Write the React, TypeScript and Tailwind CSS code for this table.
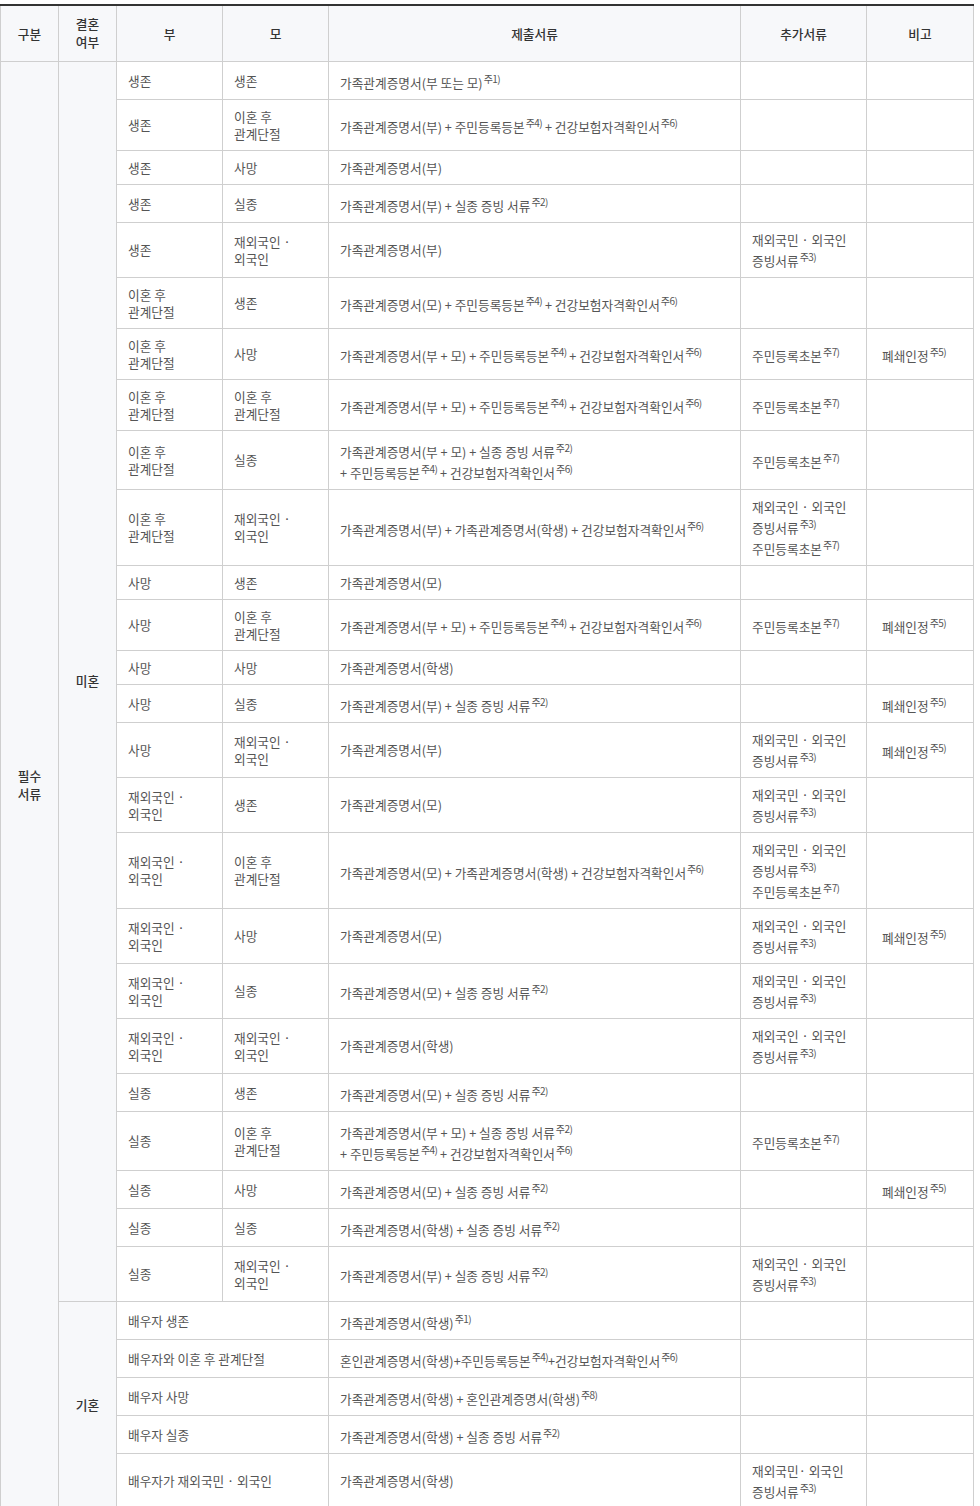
import React from "react";

type Row = {
  bu?: string;
  mo?: string;
  docs: string;
  extra?: string;
  note?: string;
};

// "^N" marks a footnote reference, rendered as 주N)
const single: Row[] = [
  { bu: "생존", mo: "생존", docs: "가족관계증명서(부 또는 모)^1" },
  { bu: "생존", mo: "이혼 후\n관계단절", docs: "가족관계증명서(부) + 주민등록등본^4 + 건강보험자격확인서^6" },
  { bu: "생존", mo: "사망", docs: "가족관계증명서(부)" },
  { bu: "생존", mo: "실종", docs: "가족관계증명서(부) + 실종 증빙 서류^2" },
  { bu: "생존", mo: "재외국인 ·\n외국인", docs: "가족관계증명서(부)", extra: "재외국민 · 외국인\n증빙서류^3" },
  { bu: "이혼 후\n관계단절", mo: "생존", docs: "가족관계증명서(모) + 주민등록등본^4 + 건강보험자격확인서^6" },
  { bu: "이혼 후\n관계단절", mo: "사망", docs: "가족관계증명서(부 + 모) + 주민등록등본^4 + 건강보험자격확인서^6", extra: "주민등록초본^7", note: "폐쇄인정^5" },
  { bu: "이혼 후\n관계단절", mo: "이혼 후\n관계단절", docs: "가족관계증명서(부 + 모) + 주민등록등본^4 + 건강보험자격확인서^6", extra: "주민등록초본^7" },
  { bu: "이혼 후\n관계단절", mo: "실종", docs: "가족관계증명서(부 + 모) + 실종 증빙 서류^2\n+ 주민등록등본^4 + 건강보험자격확인서^6", extra: "주민등록초본^7" },
  { bu: "이혼 후\n관계단절", mo: "재외국인 ·\n외국인", docs: "가족관계증명서(부) + 가족관계증명서(학생) + 건강보험자격확인서^6", extra: "재외국인 · 외국인\n증빙서류^3\n주민등록초본^7" },
  { bu: "사망", mo: "생존", docs: "가족관계증명서(모)" },
  { bu: "사망", mo: "이혼 후\n관계단절", docs: "가족관계증명서(부 + 모) + 주민등록등본^4 + 건강보험자격확인서^6", extra: "주민등록초본^7", note: "폐쇄인정^5" },
  { bu: "사망", mo: "사망", docs: "가족관계증명서(학생)" },
  { bu: "사망", mo: "실종", docs: "가족관계증명서(부) + 실종 증빙 서류^2", note: "폐쇄인정^5" },
  { bu: "사망", mo: "재외국인 ·\n외국인", docs: "가족관계증명서(부)", extra: "재외국민 · 외국인\n증빙서류^3", note: "폐쇄인정^5" },
  { bu: "재외국인 ·\n외국인", mo: "생존", docs: "가족관계증명서(모)", extra: "재외국민 · 외국인\n증빙서류^3" },
  { bu: "재외국인 ·\n외국인", mo: "이혼 후\n관계단절", docs: "가족관계증명서(모) + 가족관계증명서(학생) + 건강보험자격확인서^6", extra: "재외국민 · 외국인\n증빙서류^3\n주민등록초본^7" },
  { bu: "재외국인 ·\n외국인", mo: "사망", docs: "가족관계증명서(모)", extra: "재외국인 · 외국인\n증빙서류^3", note: "폐쇄인정^5" },
  { bu: "재외국인 ·\n외국인", mo: "실종", docs: "가족관계증명서(모) + 실종 증빙 서류^2", extra: "재외국민 · 외국인\n증빙서류^3" },
  { bu: "재외국인 ·\n외국인", mo: "재외국인 ·\n외국인", docs: "가족관계증명서(학생)", extra: "재외국인 · 외국인\n증빙서류^3" },
  { bu: "실종", mo: "생존", docs: "가족관계증명서(모) + 실종 증빙 서류^2" },
  { bu: "실종", mo: "이혼 후\n관계단절", docs: "가족관계증명서(부 + 모) + 실종 증빙 서류^2\n+ 주민등록등본^4 + 건강보험자격확인서^6", extra: "주민등록초본^7" },
  { bu: "실종", mo: "사망", docs: "가족관계증명서(모) + 실종 증빙 서류^2", note: "폐쇄인정^5" },
  { bu: "실종", mo: "실종", docs: "가족관계증명서(학생) + 실종 증빙 서류^2" },
  { bu: "실종", mo: "재외국인 ·\n외국인", docs: "가족관계증명서(부) + 실종 증빙 서류^2", extra: "재외국인 · 외국인\n증빙서류^3" },
];

const married: Row[] = [
  { bu: "배우자 생존", docs: "가족관계증명서(학생)^1" },
  { bu: "배우자와 이혼 후 관계단절", docs: "혼인관계증명서(학생)+주민등록등본^4+건강보험자격확인서^6" },
  { bu: "배우자 사망", docs: "가족관계증명서(학생) + 혼인관계증명서(학생)^8" },
  { bu: "배우자 실종", docs: "가족관계증명서(학생) + 실종 증빙 서류^2" },
  { bu: "배우자가 재외국민 · 외국인", docs: "가족관계증명서(학생)", extra: "재외국민· 외국인\n증빙서류^3" },
];

// one line = 17px; a line carrying a footnote mark gets 4px more room on top
const Txt = ({ value }: { value?: string }) => {
  if (!value) return null;
  const lines = value.split("\n");
  return (
    <>
      {lines.map((line, i) => {
        const parts = line.split(/\^(\d)/);
        const hasNote = parts.length > 1;
        return (
          <div key={i} className={"whitespace-nowrap leading-[17px]" + (hasNote ? " pt-[4px]" : "")}>
            {parts.map((p, j) =>
              j % 2 === 1 ? (
                <sup key={j} className="relative -top-[5px] ml-[1px] text-[10px] tracking-[-0.6px] leading-none">
                  주{p})
                </sup>
              ) : (
                <span key={j}>{p}</span>
              )
            )}
          </div>
        );
      })}
    </>
  );
};

const th = "border border-[#cfcfcf] bg-[#f7f8fa] font-medium text-[#333] text-center align-middle";
const td = "border border-[#cfcfcf] px-[11px] py-[8px] align-middle text-left";
const side = "border border-[#cfcfcf] bg-[#f7f8fa] font-medium text-[#333] text-center align-middle leading-[18px]";

export default function App() {
  return (
    <div
      className="bg-white pt-[4px]"
      style={{ fontFamily: '"Noto Sans CJK KR", "Noto Sans", sans-serif' }}
    >
      <table className="w-[973px] table-fixed border-collapse border-t-2 border-t-[#333] text-[12.7px] text-[#555]">
        <colgroup>
          <col className="w-[58px]" />
          <col className="w-[58px]" />
          <col className="w-[106px]" />
          <col className="w-[106px]" />
          <col className="w-[412px]" />
          <col className="w-[126px]" />
          <col className="w-[107px]" />
        </colgroup>
        <thead>
          <tr className="h-[56px]">
            <th className={th}>구분</th>
            <th className={th + " leading-[18px]"}>
              결혼
              <br />
              여부
            </th>
            <th className={th}>부</th>
            <th className={th}>모</th>
            <th className={th}>제출서류</th>
            <th className={th}>추가서류</th>
            <th className={th}>비고</th>
          </tr>
        </thead>
        <tbody>
          {single.map((r, i) => (
            <tr key={i}>
              {i === 0 && (
                <td rowSpan={single.length + married.length} className={side}>
                  필수
                  <br />
                  서류
                </td>
              )}
              {i === 0 && (
                <td rowSpan={single.length} className={side}>
                  미혼
                </td>
              )}
              <td className={td}>
                <Txt value={r.bu} />
              </td>
              <td className={td}>
                <Txt value={r.mo} />
              </td>
              <td className={td}>
                <Txt value={r.docs} />
              </td>
              <td className={td}>
                <Txt value={r.extra} />
              </td>
              <td className={td + " pl-[15px]"}>
                <Txt value={r.note} />
              </td>
            </tr>
          ))}
          {married.map((r, i) => (
            <tr key={"m" + i}>
              {i === 0 && (
                <td rowSpan={married.length} className={side}>
                  기혼
                </td>
              )}
              <td colSpan={2} className={td}>
                <Txt value={r.bu} />
              </td>
              <td className={td}>
                <Txt value={r.docs} />
              </td>
              <td className={td}>
                <Txt value={r.extra} />
              </td>
              <td className={td}>
                <Txt value={r.note} />
              </td>
            </tr>
          ))}
        </tbody>
      </table>
    </div>
  );
}
